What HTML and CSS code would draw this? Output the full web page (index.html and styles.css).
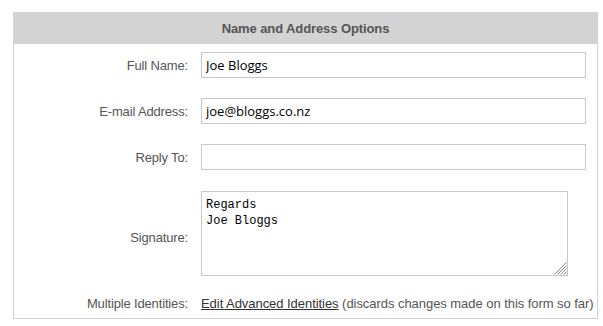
FILE: index.html
```html
<!DOCTYPE html>
<html>
<head>
<meta charset="utf-8">
<link rel="stylesheet" href="styles.css">
</head>
<body>
<div class="panel">
  <div class="panel-head">Name and Address Options</div>
  <div class="panel-body">
    <label class="lbl" for="fn">Full Name:</label>
    <input class="field" id="fn" type="text" value="Joe Bloggs">
    <label class="lbl" for="em">E-mail Address:</label>
    <input class="field" id="em" type="text" value="joe@bloggs.co.nz">
    <label class="lbl" for="rt">Reply To:</label>
    <input class="field" id="rt" type="text" value="">
    <label class="lbl lbl-sig" for="sg">Signature:</label>
    <div class="sig-wrap">
      <textarea class="sig" id="sg">Regards
Joe Bloggs</textarea>
      <svg class="grip" width="14" height="14" viewBox="0 0 14 14">
        <g stroke="#8c8c8c" stroke-width="1">
          <line x1="13.5" y1="1.5" x2="1.5" y2="13.5"/>
          <line x1="13.5" y1="4.5" x2="4.5" y2="13.5"/>
          <line x1="13.5" y1="7.5" x2="7.5" y2="13.5"/>
          <line x1="13.5" y1="10.5" x2="10.5" y2="13.5"/>
        </g>
      </svg>
    </div>
    <span class="lbl">Multiple Identities:</span>
    <span class="note"><a href="#" class="link">Edit Advanced Identities</a> (discards changes made on this form so far)</span>
  </div>
</div>
</body>
</html>
```

FILE: styles.css
```css
html, body {
  background: #fff;
}
body {
  margin: 12px 5px 0 13px;
  font-family: "Liberation Sans", Arial, sans-serif;
  font-size: 13px;
  color: #555;
}
.panel {
  width: 585px;
  box-sizing: border-box;
  border: 1px solid #d3d3d3;
  border-top: 0;
}
.panel-head {
  margin: 0 -1px;
  height: 32px;
  background: #d3d3d3;
  color: #555;
  font-weight: bold;
  font-size: 13px;
  letter-spacing: -0.1px;
  display: flex;
  align-items: center;
  justify-content: center;
}
.panel-body {
  display: grid;
  grid-template-columns: 174px minmax(0, 1fr);
  column-gap: 13px;
  row-gap: 20px;
  align-items: center;
  padding: 8px 11px 7px 0;
}
.lbl {
  text-align: right;
  color: #555;
  font-size: 13px;
  line-height: 15px;
  letter-spacing: -0.15px;
}
.lbl-sig {
  padding-top: 9px;
}
.field {
  box-sizing: border-box;
  height: 26px;
  width: 100%;
  margin: 0;
  border: 1px solid #c8c8c8;
  padding: 0 4px;
  font-family: "Open Sans", "Noto Sans", sans-serif;
  font-size: 13px;
  color: #000;
  outline: none;
}
.sig-wrap {
  position: relative;
  width: 367px;
  height: 85px;
  margin-top: 1px;
}
.sig {
  display: block;
  box-sizing: border-box;
  width: 367px;
  height: 85px;
  margin: 0;
  border: 1px solid #c8c8c8;
  padding: 5px 4px;
  font-family: "Liberation Mono", "DejaVu Sans Mono", monospace;
  font-size: 12px;
  line-height: 16px;
  color: #000;
  resize: none;
  outline: none;
}
.grip {
  position: absolute;
  right: 1px;
  bottom: 1px;
}
.note {
  color: #555;
  white-space: nowrap;
  line-height: 15px;
  letter-spacing: -0.05px;
}
.link {
  color: #333;
  text-decoration: underline;
}
```
